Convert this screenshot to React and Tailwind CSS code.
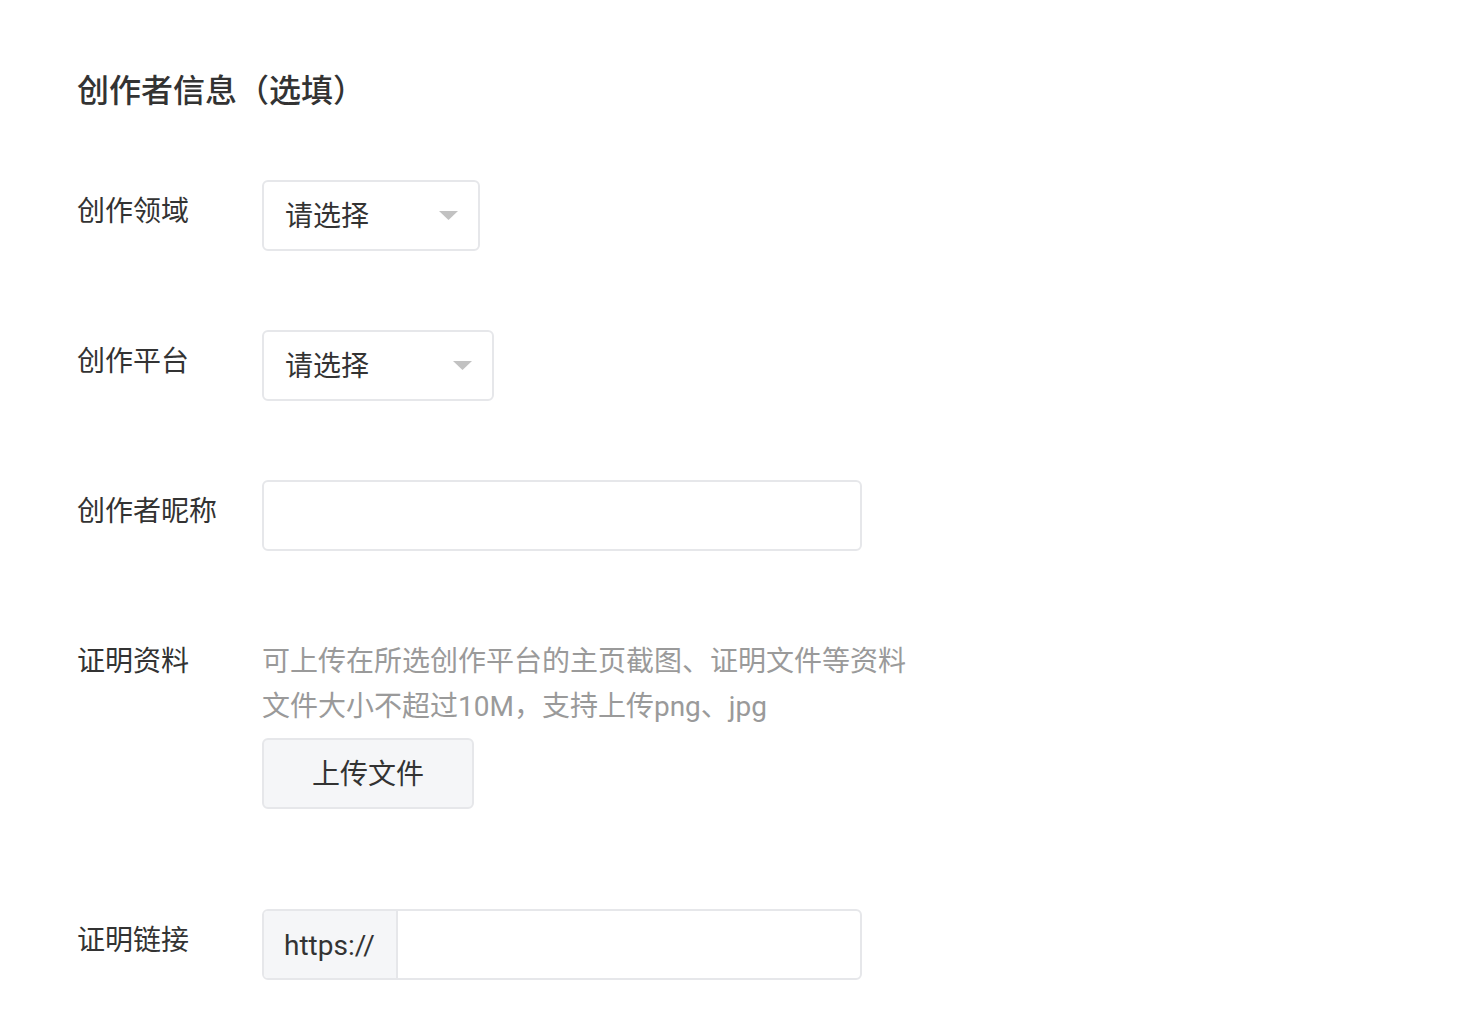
import React from "react";

const font = { fontFamily: 'Roboto, "Noto Sans CJK SC", sans-serif' };

function Arrow() {
  return (
    <svg width="19" height="9" viewBox="0 0 19 9" className="shrink-0">
      <path d="M0 0 L19 0 L9.5 9 Z" fill="#c2c2c2" />
    </svg>
  );
}

function Select({ w }) {
  return (
    <div
      className={`flex h-[71px] items-center justify-between rounded-[6px] border-2 border-[#e6e7ea] bg-white pl-[21px] pr-[20px] ${w}`}
    >
      <span className="mt-[3px] text-[28px] leading-[40px] text-[#333]">请选择</span>
      <Arrow />
    </div>
  );
}

function Label({ children }) {
  return (
    <div className="mt-[12px] w-[185px] shrink-0 text-[28px] leading-[40px] text-[#333]">
      {children}
    </div>
  );
}

export default function App() {
  return (
    <div className="min-h-[1014px] w-full bg-white pl-[77px] pt-[69px]" style={font}>
      <div className="text-[32px] font-medium leading-[44px] text-[#333]">
        创作者信息（选填）
      </div>

      <div className="mt-[67px] flex items-start">
        <Label>创作领域</Label>
        <Select w="w-[218px]" />
      </div>

      <div className="mt-[79px] flex items-start">
        <Label>创作平台</Label>
        <Select w="w-[232px]" />
      </div>

      <div className="mt-[79px] flex items-start">
        <Label>创作者昵称</Label>
        <div className="h-[71px] w-[600px] rounded-[6px] border-2 border-[#e6e7ea] bg-white" />
      </div>

      <div className="mt-[79px] flex items-start">
        <Label>证明资料</Label>
        <div className="flex flex-col items-start">
          <div className="mt-[9px] text-[28px] leading-[45px] text-[#9a9a9a]">
            <div>可上传在所选创作平台的主页截图、证明文件等资料</div>
            <div>文件大小不超过10M，支持上传png、jpg</div>
          </div>
          <button className="mt-[9px] flex h-[71px] w-[212px] items-center justify-center rounded-[6px] border-2 border-[#e6e7ea] bg-[#f5f6f8] pt-[3px] text-[28px] text-[#333]">
            上传文件
          </button>
        </div>
      </div>

      <div className="mt-[100px] flex items-start">
        <Label>证明链接</Label>
        <div className="flex h-[71px] w-[600px] overflow-hidden rounded-[6px] border-2 border-[#e6e7ea] bg-white">
          <div className="flex w-[134px] items-center border-r-2 border-[#e6e7ea] bg-[#f5f6f8] pl-[20px] pt-[3px] text-[28px] text-[#333]">
            https://
          </div>
          <div className="flex-1" />
        </div>
      </div>
    </div>
  );
}
